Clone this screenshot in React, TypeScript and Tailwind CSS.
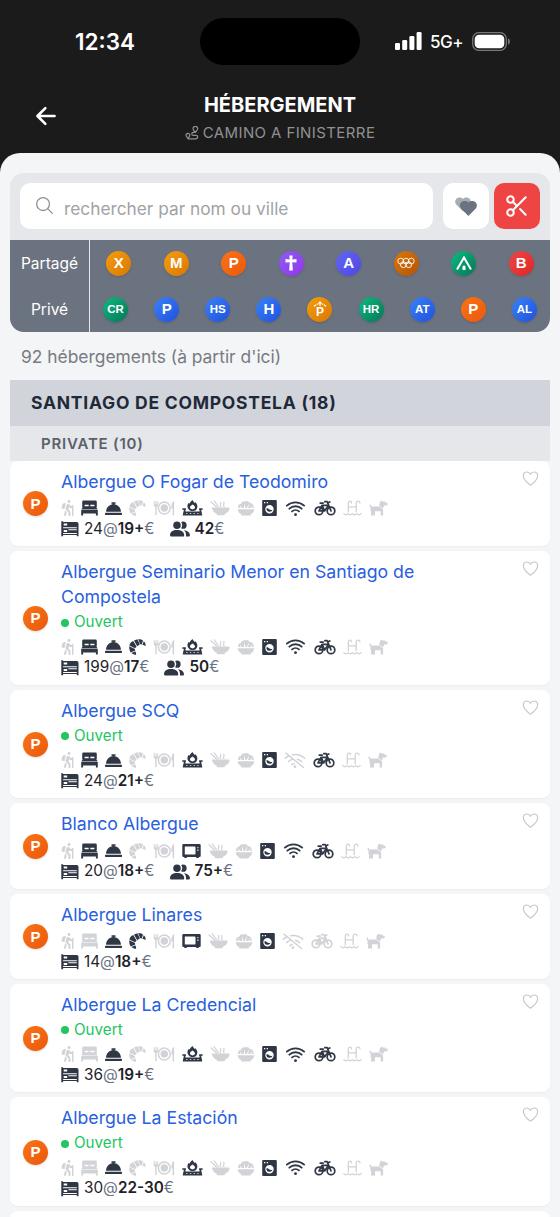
import React from 'react';
import { FaConciergeBell, FaHiking } from 'react-icons/fa';
import { IoArrowBack, IoHeartOutline, IoSearchOutline, IoWifi } from 'react-icons/io5';
import { Scissors } from 'lucide-react';

type Amenity =
  | 'hiking' | 'bed' | 'bell' | 'breakfast' | 'meal' | 'stove' | 'microwave' | 'bowl'
  | 'salad' | 'washer' | 'wifi' | 'nowifi' | 'bike' | 'pool' | 'dog';

interface Hostel {
  name: string;
  open?: boolean;
  active: Amenity[];
  kitchen?: Amenity;
  wifi?: Amenity;
  beds: string;
  price: string;
  privatePrice?: string;
}

const hostels: Hostel[] = [
  { name: 'Albergue O Fogar de Teodomiro', active: ['bed', 'bell', 'stove', 'washer', 'wifi', 'bike'], beds: '24', price: '19+', privatePrice: '42' },
  { name: 'Albergue Seminario Menor en Santiago de Compostela', open: true, active: ['bed', 'bell', 'breakfast', 'stove', 'washer', 'wifi', 'bike'], beds: '199', price: '17', privatePrice: '50' },
  { name: 'Albergue SCQ', open: true, active: ['bed', 'bell', 'stove', 'washer', 'bike'], wifi: 'nowifi', beds: '24', price: '21+' },
  { name: 'Blanco Albergue', active: ['bed', 'bell', 'microwave', 'washer', 'wifi', 'bike'], kitchen: 'microwave', beds: '20', price: '18+', privatePrice: '75+' },
  { name: 'Albergue Linares', active: ['bell', 'breakfast', 'microwave', 'washer'], kitchen: 'microwave', wifi: 'nowifi', beds: '14', price: '18+' },
  { name: 'Albergue La Credencial', open: true, active: ['bell', 'stove', 'washer', 'wifi', 'bike'], beds: '36', price: '19+' },
  { name: 'Albergue La Estación', open: true, active: ['bell', 'stove', 'washer', 'wifi', 'bike'], beds: '30', price: '22-30' },
];

const BedIcon = () => (
  <svg viewBox="0 0 17 16" className="h-4 w-[17px]" fill="currentColor">
    <path fillRule="evenodd" d="M2.500.600h12q1.300 0 1.300 1.300v5H1.200v-5Q1.200.600 2.500.600zM3.600 4.700v1.500h4.100V4.700zm5.700 0v1.500h4.100V4.700z" />
    <path d="M1.700 6.900h13.600l1.300 2.500H.4zM.2 9.900h16.600v5.500h-1.900v-1.800H2.100v1.800H.2z" />
  </svg>
);

const CroissantIcon = () => (
  <svg viewBox="0 0 17 16" className="h-4 w-[17px]" fill="currentColor">
    <path d="M5 1.500 8.300.200l2.600 5-2.700 2zM.4 6.500C.7 4.400 2.100 2.500 4.300 1.900l3.300 5.900-1.700 1.500zM.2 7.300l5.800 2.600.2 1.500-4.400 2C.6 11.900.1 9.900.2 7.300zM9.100.200c2-.2 3.700.2 4.900 1.300l-1.300 3.900-1.400-.1zM14.800 2.200c1.400 1.100 2 2.600 1.800 4.700-1.300-.6-2.200-1-3.200-1.200zM2.400 14l3.900-1.800c.6 1.200 1 2.400.8 3.600-1.800 0-3.300-.6-4.700-1.800z" />
  </svg>
);

const MealIcon = () => (
  <svg viewBox="0 0 22 16" className="h-4 w-[22px]" fill="none" stroke="currentColor">
    <circle cx="11.300" cy="8" r="5.900" strokeWidth="1.500" />
    <circle cx="11.300" cy="8" r="3.700" fill="currentColor" stroke="none" />
    <path d="M1.200 1.200v3.500M3 1.200v4M4.800 1.200v3.500" strokeWidth="1" />
    <path d="M.7 4.300h4.600Q5.200 6.700 3.700 7v8.200H2.300V7Q.8 6.700.7 4.300zM20.800 1q-2.500 1.500-2.500 7.500h1.300v6.700h1.500V1z" fill="currentColor" stroke="none" />
  </svg>
);

const StoveIcon = () => (
  <svg viewBox="0 0 21 16" className="h-4 w-[21px]" fill="none" stroke="currentColor">
    <path fill="currentColor" stroke="none" fillRule="evenodd" d="M6.500 2.900l1.200.7C8.200 2.100 9.300.8 10.700 0c.2 1.400 1.200 1.900 2 2.900l.8-.6c2.300 2.500 2.500 5.300.7 7.400-.9 1-2.200 1.400-3.700 1.400s-2.800-.5-3.700-1.500C5 7.600 5 5 6.500 2.900zM10.700 4.500C8 5.900 7.400 7.400 8.400 8.600c1 1.100 3.200 1.100 4.200 0 1-1.200.3-2.500-1.900-4.100z" />
    <path d="M1 9h2.300M17.700 9H20M2.600 9v3M18.400 9v3" strokeWidth="1.700" strokeLinecap="round" />
    <path fillRule="evenodd" fill="currentColor" stroke="none" d="M1.500 11.500h18l.8 3.900H.7zM4.200 12.900v.9h1.300v-.9zm3.700 0v.9h1.300v-.9zm3.700 0v.9h1.300v-.9zm3.700 0v.9h1.300v-.9z" />
  </svg>
);

const MicrowaveIcon = () => (
  <svg viewBox="0 0 19 16" className="h-4 w-[19px]" fill="currentColor">
    <path fillRule="evenodd" d="M1.500 1h16q1.200 0 1.200 1.200v10.600q0 1.200-1.200 1.200h-.8v1h-2.500v-1H4.800v1H2.300v-1h-.8Q.3 14 .3 12.800V2.200Q.3 1 1.500 1zm1.300 2.500v8h9.900q.8 0 .8-.8V4.300q0-.8-.8-.8zm12.600.5v1.300h1V4zm0 2.600v1.300h1V6.600z" />
  </svg>
);

const BowlIcon = () => (
  <svg viewBox="0 0 20 16" className="h-4 w-5" fill="currentColor">
    <path d="M1.700 7.500h17.100q1 0 .8 1c-.7 2.800-2.400 4.500-4.900 5.500v1.300H7V14C4.200 12.700 2.400 10.700 1.700 7.500z" />
    <path d="M.9 1.800 6.700 7M4.200.8 8.800 7M10.800 6.500c-1.500-1.700.8-2.300-.2-4.200M14 6.500c-1.500-1.700.8-2.300-.2-4.200" fill="none" stroke="currentColor" strokeWidth="1.200" strokeLinecap="round" />
  </svg>
);

const SaladIcon = () => (
  <svg viewBox="0 0 18 16" className="h-4 w-[18px]" fill="currentColor">
    <path d="M.7 9.200h16.600c-.2 2.500-1.500 4-3.600 5v1.200H4.300v-1.200C2.200 13.200.9 11.700.7 9.200z" />
    <path d="M1.200 8C.8 5.200 2 3.800 4 4 4.500 2 6.200 1 8 1.500 9.700.3 12 1 12.800 3c2.500-.1 4.200 2 4 5h-2.300l2-3-3.300 3H11l1.500-5L9.700 8H8.400L7.200 3.300 7 8H5L2.700 5.200 3.700 8z" />
  </svg>
);

const WasherIcon = () => (
  <svg viewBox="0 0 15 16" className="h-4 w-[15px]" fill="currentColor">
    <path fillRule="evenodd" d="M1.200.1h12.600q1 0 1 1v13.800q0 1-1 1H1.200q-1 0-1-1V1.100q0-1 1-1zM2 2v1.300h1.300V2zm2.700 0v1.300H6V2zM7.500 5a4.200 4.200 0 1 0 0 8.400 4.200 4.200 0 0 0 0-8.400z" />
    <path d="M4.400 8.400c1.200-.7 1.800.1 2.700.9 1.100.9 2.100 1 3.500.4A3.200 3.200 0 0 1 4.400 8.400z" />
  </svg>
);

const NoWifiIcon = () => (
  <svg viewBox="0 0 22 17" className="h-[17px] w-[22px]" fill="none" stroke="currentColor" strokeWidth="1.500" strokeLinecap="round">
    <path d="M2 1.200 19.500 15.500M1.200 6.200A15 15 0 0 1 4.500 4M8.500 2.700c4.500-.8 8.900.4 12.200 3.500M4.500 9.600a10 10 0 0 1 3.700-2.200M13.500 7.300c1.500.4 2.800 1.200 4 2.300M7.800 12.600c.8-.7 1.600-1.100 2.600-1.200" />
    <circle cx="11" cy="14.700" r="1.400" fill="currentColor" stroke="none" />
  </svg>
);

const BikeIcon = () => (
  <svg viewBox="0 0 22 16" className="h-4 w-[22px]" fill="none" stroke="currentColor" strokeWidth="1.700" strokeLinecap="round" strokeLinejoin="round">
    <circle cx="5" cy="10.900" r="3.800" />
    <circle cx="17" cy="10.900" r="3.800" />
    <path d="M5 10.900 8 5.400h6M8.200 5.400 10.600 10.900H5M10.600 10.900l3.800-5.500M17 10.900 13.200 1.700h-2.400M6.200 3.100h3M13.600 2.900l2.200-.9" />
  </svg>
);

const PoolIcon = () => (
  <svg viewBox="0 0 19 16" className="h-4 w-[19px]" fill="none" stroke="currentColor" strokeWidth="1.300" strokeLinecap="round">
    <path d="M5.300 11.700V3.200C5.300.700 8.300.500 8.500 2.900M13.200 11.700V3.200c0-2.500 3.400-2.700 3.800-.3M5.300 6.800h7.900" />
    <path d="M.8 13.600c1.500 1.500 2.900 1.500 4.300 0 1.500 1.500 2.900 1.500 4.400 0 1.400 1.500 2.900 1.500 4.300 0 1.500 1.500 2.900 1.500 4.400 0" />
  </svg>
);

const DogIcon = () => (
  <svg viewBox="0 0 19 16" className="h-4 w-[19px]" fill="currentColor">
    <path d="M.4 4.700q1.200-.6 1.700.7l.3 1.200h7.500l4.200 2.700v6.200h-2.400v-4.200H6v4.200H1.800l.5-3.500-.8-1.300V7.500Q.4 6.700.4 4.700z" />
    <path d="M11 2.100 12.600.400l1 1.200h2.600l.6 1.100h1.900v1.200q-.2 1.700-2 1.700h-1.800l-.8 2.800-4-2.400z" />
  </svg>
);

const BunkIcon = () => (
  <svg viewBox="0 0 18 16" className="h-4 w-[18px]" fill="currentColor">
    <path fillRule="evenodd" d="M.3.200h1.800v.9h13.700q1.700 0 1.700 1.700v12.400h-1.700v-1.100H2.100v1.100H.3zM2.700 2.600v2h3.500v-2zM2.100 6.200v1h13.700v-1zM2.700 8.900v2h3.500v-2zM7.400 8.300v.9h8.400v-.9zM2.100 12.100v.8h13.700v-.8z" />
  </svg>
);

const PeopleIcon = () => (
  <svg viewBox="2 3.500 20 16" className="h-4 w-5" fill="currentColor">
    <path d="M15.700 19H3.300Q2 19 2 17.500C2.300 14.500 4.800 12.600 9 12.600s6.900 1.900 7.200 4.900q0 1.500-.5 1.500M12.800 7.800A3.800 3.800 0 1 0 9 11.600a3.800 3.800 0 0 0 3.800-3.800M15.900 12.800a5.300 5.300 0 0 1 2.100 4.200v2h2.800q1.200 0 1.200-1.300c-.2-2.600-2.700-4.700-6.100-4.900M15 4a3.600 3.600 0 0 0-1.900.6 5 5 0 0 1 0 6.100A3.600 3.600 0 0 0 15 11.300a3.600 3.600 0 0 0 0-7.300z" />
  </svg>
);

const RouteIcon = () => (
  <svg viewBox="0 0 14 14" className="h-3.5 w-3.5" fill="none" stroke="currentColor" strokeWidth="1.200" strokeLinejoin="round">
    <path d="M10.400 6.300C8.800 4.600 8 3.700 8 2.700a2.300 2.300 0 0 1 4.700 0c0 1-.8 1.900-2.300 3.600zM3 12.600C1.600 11 1 10.200 1 9.300a1.900 1.900 0 0 1 3.800 0c0 .9-.6 1.700-1.800 3.300zM3 12.800h8a1.700 1.700 0 0 0 0-3.400H8.300a1.500 1.500 0 0 1 0-3h2" />
  </svg>
);

const amenityIcons: Record<Amenity, React.ReactNode> = {
  hiking: <FaHiking className="h-4 w-[13px]" />,
  bed: <BedIcon />,
  bell: <FaConciergeBell className="h-[17px] w-[17px]" />,
  breakfast: <CroissantIcon />,
  meal: <MealIcon />,
  stove: <StoveIcon />,
  microwave: <MicrowaveIcon />,
  bowl: <BowlIcon />,
  salad: <SaladIcon />,
  washer: <WasherIcon />,
  wifi: <IoWifi className="h-[23px] w-[23px]" />,
  nowifi: <NoWifiIcon />,
  bike: <BikeIcon />,
  pool: <PoolIcon />,
  dog: <DogIcon />,
};

const Badge = ({ color, children, small }: { color: string; children: React.ReactNode; small?: boolean }) => (
  <div className={`flex h-[25px] w-[25px] shrink-0 items-center justify-center rounded-full font-['Liberation_Sans',sans-serif] font-bold text-white shadow-sm ${small ? 'pt-px text-[11.500px]' : 'text-[15px]'} ${color}`}>
    {children}
  </div>
);

const amber = 'bg-linear-to-br from-[#f59e0b] to-[#d97706]';
const orange = 'bg-linear-to-br from-[#f97316] to-[#ea580c]';
const blue = 'bg-linear-to-br from-[#3b82f6] to-[#2050dd]';
const green = 'bg-linear-to-br from-[#10b981] to-[#047857]';

const CrossIcon = () => (
  <svg viewBox="0 0 12 16" className="h-4 w-3" fill="currentColor">
    <path d="M4.300.500h3.400l-.4 4 4.200-.4v3.500l-4.200-.4.500 8.300H4.200l.5-8.300-4.200.4V4.100l4.200.4z" />
  </svg>
);

const RingsIcon = () => (
  <svg viewBox="0 0 18 12" className="h-3 w-[18px]" fill="none" stroke="currentColor" strokeWidth=".9">
    <circle cx="3.700" cy="4.100" r="2.900" />
    <circle cx="9" cy="4.100" r="2.900" />
    <circle cx="14.300" cy="4.100" r="2.900" />
    <circle cx="6.300" cy="7.700" r="2.900" />
    <circle cx="11.700" cy="7.700" r="2.900" />
  </svg>
);

const TentIcon = () => (
  <svg viewBox="0 0 16 15" className="h-[15px] w-4" fill="none" stroke="currentColor">
    <path d="M1 13.500 8 1.500l7 12" strokeWidth="2" />
    <path d="M6.500 13.900v-3.400L8 9.300l1.500 1.200v3.400z" fill="currentColor" stroke="none" />
  </svg>
);

const shared = [
  <Badge color={amber}>X</Badge>,
  <Badge color={amber}>M</Badge>,
  <Badge color={orange}>P</Badge>,
  <Badge color="bg-linear-to-br from-[#8b5cf6] to-[#9333ea]"><CrossIcon /></Badge>,
  <Badge color="bg-linear-to-br from-[#6366f1] to-[#4f46e5]">A</Badge>,
  <Badge color="bg-linear-to-br from-[#d97706] to-[#b45309]"><RingsIcon /></Badge>,
  <Badge color={green}><TentIcon /></Badge>,
  <Badge color="bg-linear-to-br from-[#ef4444] to-[#dc2626]">B</Badge>,
];

const priv = [
  <Badge color={green} small>CR</Badge>,
  <Badge color={blue}>P</Badge>,
  <Badge color={blue} small>HS</Badge>,
  <Badge color={blue}>H</Badge>,
  <Badge color={amber}>
    <div className="flex flex-col items-center">
      <svg viewBox="0 0 14 6" className="h-1.5 w-3.5" fill="currentColor">
        <path d="M1 5.300Q4 3 5.700 2.700M13 5.300Q10 3 8.300 2.700" fill="none" stroke="currentColor" strokeWidth="1.200" strokeDasharray="2 .8" />
        <path d="M7 0l2 2.600H7.600V5H6.400V2.600H5z" />
      </svg>
      <span className="text-[12px] leading-[11px]">P</span>
    </div>
  </Badge>,
  <Badge color={green} small>HR</Badge>,
  <Badge color={blue} small>AT</Badge>,
  <Badge color={orange}>P</Badge>,
  <Badge color={blue} small>AL</Badge>,
];

const BadgeRow = ({ items }: { items: React.ReactNode[] }) => (
  <div className="flex h-[46px] items-center">
    {items.map((b, i) => (
      <div key={i} className="flex flex-1 justify-center">{b}</div>
    ))}
  </div>
);

const StatusBar = () => (
  <div className="flex h-[82px] items-center pl-[75px] text-white">
    <div className="w-[125px] pt-px text-[22.500px] font-semibold">12:34</div>
    <div className="h-[47px] w-40 rounded-full bg-black" />
    <div className="ml-[35px] flex items-center">
      <svg viewBox="0 0 28 18" className="h-[18px] w-7" fill="currentColor">
        <rect x="0" y="11" width="5" height="7" rx="1.300" />
        <rect x="7.200" y="8" width="5" height="10" rx="1.300" />
        <rect x="14.400" y="4" width="5" height="14" rx="1.300" />
        <rect x="21.600" y="0" width="5" height="18" rx="1.300" />
      </svg>
      <span className="ml-[7px] w-[42px] pt-[3px] text-[17px] font-medium tracking-[-0.500px]">5G+</span>
      <svg viewBox="0 0 39 19" className="h-[19px] w-[39px] shrink-0">
        <rect x=".7" y=".7" width="33.600" height="17.600" rx="6" fill="none" stroke="#77777a" strokeWidth="1.300" />
        <rect x="2.700" y="2.700" width="29.600" height="13.600" rx="4.300" fill="#fff" />
        <path d="M36 6.300v6.400q2-1 2-3.200t-2-3.200z" fill="#77777a" />
      </svg>
    </div>
  </div>
);

const HostelCard = ({ hostel }: { hostel: Hostel }) => {
  const row: Amenity[] = [
    'hiking', 'bed', 'bell', 'breakfast', 'meal', hostel.kitchen ?? 'stove', 'bowl',
    'salad', 'washer', hostel.wifi ?? 'wifi', 'bike', 'pool', 'dog',
  ];
  return (
    <div className="flex rounded-lg bg-white pt-2 pr-2.5 pb-[7px] pl-[13px] shadow-[0_1px_2px_rgba(0,0,0,0.040)]">
      <div className="flex w-[38px] shrink-0 items-center">
        <Badge color={orange}>P</Badge>
      </div>
      <div className="min-w-0 flex-1">
        <div className="max-w-[400px] text-[17.700px] leading-[25.400px] text-[#2860e0]">{hostel.name}</div>
        {hostel.open && (
          <div className="flex h-[23px] items-center gap-[5px] pt-[3px] text-[15.200px] text-[#22c55e]">
            <span className="h-2 w-2 rounded-full bg-[#22c55e]" />
            Ouvert
          </div>
        )}
        <div className="flex h-6 items-center gap-[7px] pt-1">
          {row.map((a) => (
            <span key={a} className={`shrink-0 ${hostel.active.includes(a) ? 'text-[#303744]' : 'text-[#d1d3d7]'}`}>
              {amenityIcons[a]}
            </span>
          ))}
        </div>
        <div className="flex h-[21px] items-center pt-px text-[15.300px] text-[#1f2329]">
          <span className="mr-[5px] text-[#303744]"><BunkIcon /></span>
          <span>{hostel.beds}</span>
          <span className="text-gray-500">@</span>
          <span className="font-semibold">{hostel.price}</span>
          <span className="text-gray-500">€</span>
          {hostel.privatePrice && (
            <>
              <span className="mr-[5px] ml-[15px] text-[#303744]"><PeopleIcon /></span>
              <span className="font-semibold">{hostel.privatePrice}</span>
              <span className="text-gray-500">€</span>
            </>
          )}
        </div>
      </div>
      <IoHeartOutline className="h-[19px] w-[19px] shrink-0 text-[#c3c8cf]" />
    </div>
  );
};

export default function App() {
  return (
    <div className="h-[1217px] w-[560px] overflow-hidden bg-[#1b1b1b] font-['Inter',sans-serif]">
      <StatusBar />
      <div className="flex h-[71px] items-center pr-[34px] pl-[32px] text-white">
        <IoArrowBack className="mb-1 h-7 w-7" />
        <div className="flex flex-1 flex-col items-center pt-0.5 pr-[26px]">
          <h1 className="text-[20px] leading-6 font-bold">HÉBERGEMENT</h1>
          <div className="mt-1 flex items-center gap-1 text-[15px] leading-6 tracking-[0.400px] text-[#919194]">
            <RouteIcon />
            CAMINO A FINISTERRE
          </div>
        </div>
      </div>

      <div className="h-[1064px] overflow-hidden rounded-t-[20px] bg-[#f3f5f7] px-2.5 pt-5">
        <div className="overflow-hidden rounded-[14px] bg-[#e5e7eb]">
          <div className="flex h-[67px] items-start px-2.5 pt-2.5">
            <div className="flex h-[46px] w-[413px] items-center gap-[9px] rounded-[10px] bg-white pt-[5px] pl-[14px] text-[17.300px] text-[#a0a2a6]">
              <IoSearchOutline className="mb-1.5 h-[21px] w-[21px] text-[#8d9197]" />
              rechercher par nom ou ville
            </div>
            <div className="ml-2.5 flex h-[46px] w-[46px] items-center justify-center rounded-[10px] bg-white">
              <svg viewBox="0 0 24 24" className="h-6 w-6">
                <path d="M9 17.500 2 10.300C-1 6.300 4.500 1 9 4.900c4.500-3.900 10 1.400 7 5.400z" fill="#a8acb3" />
                <path d="M14.400 22 6.800 14.200c-3.200-4.300 2.500-9.800 7.600-5.800 5.100-4 10.800 1.500 7.600 5.800z" fill="#6b7280" />
              </svg>
            </div>
            <div className="ml-[5px] flex h-[46px] w-[46px] items-center justify-center rounded-[10px] bg-[#ef4444] text-white">
              <Scissors size={26} strokeWidth={1.900} />
            </div>
          </div>
          <div className="flex bg-[#6b7280]">
            <div className="w-20 border-r border-[#e5e7eb] text-center text-[15.500px] leading-[46px] text-white">
              <div className="h-[46px] pt-px">Partagé</div>
              <div className="h-[46px] pt-px">Privé</div>
            </div>
            <div className="flex-1">
              <BadgeRow items={shared} />
              <BadgeRow items={priv} />
            </div>
          </div>
        </div>

        <div className="flex h-[47.600px] items-center pt-0.5 pl-[11px] text-[17.400px] text-[#777b82]">92 hébergements (à partir d'ici)</div>

        <div className="h-[46px] bg-[#d1d5db] pl-[21px] text-[17.500px] leading-[46px] font-bold tracking-[0.750px] text-[#1f2937]">
          SANTIAGO DE COMPOSTELA (18)
        </div>
        <div className="h-[35px] bg-[#e5e7eb] pl-[31px] text-[15px] leading-[35px] font-semibold tracking-[0.780px] text-[#5b606a]">
          PRIVATE (10)
        </div>

        <div className="flex flex-col gap-[5px]">
          {hostels.map((h) => (
            <HostelCard key={h.name} hostel={h} />
          ))}
          <div className="h-10 rounded-lg bg-white" />
        </div>
      </div>
    </div>
  );
}
